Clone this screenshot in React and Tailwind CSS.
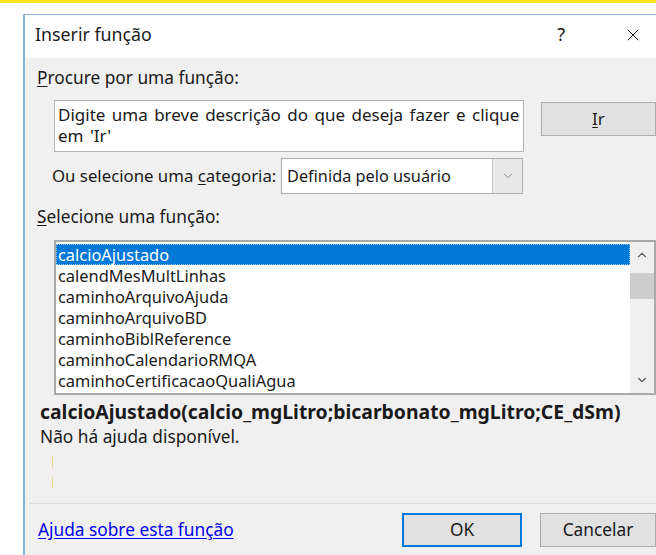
import { ChevronDown, ChevronUp, X } from "lucide-react";

const functions = [
  "calcioAjustado",
  "calendMesMultLinhas",
  "caminhoArquivoAjuda",
  "caminhoArquivoBD",
  "caminhoBiblReference",
  "caminhoCalendarioRMQA",
  "caminhoCertificacaoQualiAgua",
];

function Mnemonic({ ch, rest }) {
  return (
    <>
      <span className="underline underline-offset-2">{ch}</span>
      {rest}
    </>
  );
}

export default function App() {
  const font = { fontFamily: '"Noto Sans", "Open Sans", sans-serif' };

  return (
    <div className="flex h-[555px] w-[656px] flex-col overflow-hidden bg-white text-[#1a1a1a]" style={font}>
      <div className="h-[3px] w-full shrink-0 bg-[#fde21c]" />

      <div className="ml-[23px] mt-[11px] flex flex-1 flex-col border-l-2 border-t border-[#8bb2e0]">
        {/* title bar */}
        <div className="flex h-[43px] shrink-0 items-center bg-white pb-[4px] pl-[10px] text-[17.8px]">
          <span>Inserir função</span>
          <span className="ml-auto mr-[58px] text-[18px]">?</span>
          <X className="mr-[13px] h-[20px] w-[20px]" strokeWidth={1.2} />
        </div>

        {/* body */}
        <div className="flex flex-1 flex-col bg-[#f0f0f0] text-[17.3px]">
          <div className="ml-[12px] mt-[9px] leading-[22px]">
            <Mnemonic ch="P" rest="rocure por uma função:" />
          </div>

          <div className="mt-[11px] flex items-start">
            <div className="ml-[29px] h-[52px] w-[470px] shrink-0 whitespace-nowrap border border-[#b5b5b5] bg-white pl-[3px] pt-[3px] text-[17px] leading-[21px] [word-spacing:2px]">
              Digite uma breve descrição do que deseja fazer e clique
              <br />
              em 'Ir'
            </div>
            <button className="ml-[17px] mt-[2px] h-[34px] flex-1 border border-[#adadad] bg-[#e1e1e1] text-[17px]">
              <Mnemonic ch="I" rest="r" />
            </button>
          </div>

          <div className="mt-[6px] flex items-center">
            <span className="ml-[27px] w-[229px] shrink-0 whitespace-nowrap text-[16.8px]">
              Ou selecione uma <Mnemonic ch="c" rest="ategoria:" />
            </span>
            <div className="flex h-[36px] w-[242px] shrink-0 border border-[#adadad] bg-white text-[16.3px]">
              <span className="flex-1 pl-[5px] leading-[34px]">Definida pelo usuário</span>
              <div className="flex w-[30px] items-center justify-center border-l border-[#c8c8c8] bg-[#e8e8e8]">
                <ChevronDown className="h-[14px] w-[14px] text-[#606060]" strokeWidth={1.2} />
              </div>
            </div>
          </div>

          <div className="ml-[12px] mt-[12px] leading-[22px]">
            <Mnemonic ch="S" rest="elecione uma função:" />
          </div>

          {/* function list */}
          <div className="ml-[29px] mt-[12px] flex h-[155px] shrink-0 border-2 border-[#a9a9a9] bg-white text-[16.4px]">
            <div className="flex-1 pt-[2px]">
              {functions.map((name, i) => (
                <div
                  key={name}
                  className={
                    i === 0
                      ? "h-[21px] border border-dotted border-[#9ec5f0] bg-[#0078d7] pl-px leading-[19px] text-white"
                      : "h-[21px] pl-[2px] leading-[21px]"
                  }
                >
                  {name}
                </div>
              ))}
            </div>
            <div className="flex w-[24px] flex-col items-center bg-[#f0f0f0]">
              <ChevronUp className="mt-[6px] h-[14px] w-[14px] text-[#606060]" strokeWidth={2} />
              <div className="mt-[11px] h-[26px] w-full bg-[#cdcdcd]" />
              <div className="flex-1" />
              <ChevronDown className="mb-[6px] h-[14px] w-[14px] text-[#606060]" strokeWidth={2} />
            </div>
          </div>

          <div className="ml-[15px] mt-[5px] whitespace-nowrap text-[19.4px] font-bold leading-[24px]">
            calcioAjustado(calcio_mgLitro;bicarbonato_mgLitro;CE_dSm)
          </div>
          <div className="ml-[15px] mt-[1px] leading-[24px]">Não há ajuda disponível.</div>

          <div className="ml-[27px] mt-[7px] h-[13px] w-px shrink-0 bg-[#ecd79a]" />
          <div className="ml-[27px] mt-[7px] h-[12px] w-px shrink-0 bg-[#ecd79a]" />

          <div className="ml-[5px] mt-[15px] h-px shrink-0 bg-[#dadada]" />

          <div className="mt-[9px] flex items-center">
            <a className="ml-[13px] text-[#0000ee] underline underline-offset-2">Ajuda sobre esta função</a>
            <button className="ml-auto h-[34px] w-[120px] border-2 border-[#0078d7] bg-[#e1e1e1]">OK</button>
            <button className="ml-[18px] h-[34px] w-[116px] border border-[#adadad] bg-[#e1e1e1]">Cancelar</button>
          </div>
        </div>
      </div>
    </div>
  );
}
